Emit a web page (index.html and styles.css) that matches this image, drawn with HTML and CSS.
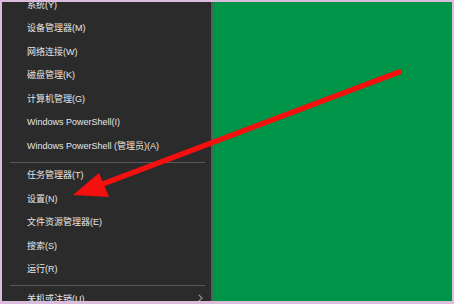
FILE: index.html
```html
<!DOCTYPE html>
<html lang="zh-CN">
<head>
<meta charset="utf-8">
<link rel="stylesheet" href="styles.css">
</head>
<body>
<div class="frame">
  <nav class="menu">
    <ul class="list">
      <li class="item">系统(Y)</li>
      <li class="item">设备管理器(M)</li>
      <li class="item">网络连接(W)</li>
      <li class="item">磁盘管理(K)</li>
      <li class="item">计算机管理(G)</li>
      <li class="item">Windows PowerShell(I)</li>
      <li class="item">Windows PowerShell (管理员)(A)</li>
      <li class="sep"></li>
      <li class="item">任务管理器(T)</li>
      <li class="item">设置(N)</li>
      <li class="item">文件资源管理器(E)</li>
      <li class="item">搜索(S)</li>
      <li class="item">运行(R)</li>
      <li class="sep"></li>
      <li class="item has-sub">关机或注销(U)
        <svg class="chev" width="5" height="8" viewBox="0 0 5 8"><path d="M0.8 0.8 L4 4 L0.8 7.2" fill="none" stroke="#9a9a9a" stroke-width="1.1"/></svg>
      </li>
    </ul>
  </nav>
  <div class="edge"></div>
  <div class="desktop"></div>
  <svg class="arrow" width="454" height="304" viewBox="0 0 454 304">
    <line x1="399" y1="72" x2="100" y2="185" stroke="#f50f0f" stroke-width="5.5" stroke-linecap="round"/>
    <polygon points="73,195 99,173 109,197" fill="#f50f0f"/>
  </svg>
</div>
</body>
</html>
```
FILE: styles.css
```css
html, body {
  margin: 0;
  padding: 0;
}
body {
  width: 454px;
  height: 304px;
  background: #dcbcdc;
  overflow: hidden;
}
.frame {
  position: relative;
  display: flex;
  height: 304px;
  box-sizing: border-box;
  padding: 2px 2px 3px 2px;
}
.menu {
  width: 209px;
  background: #2b2b2b;
  overflow: hidden;
  flex: none;
}
.list {
  list-style: none;
  margin: -9.6px 0 0 0;
  padding: 0;
  font-family: "Liberation Sans", "Noto Sans CJK SC", sans-serif;
  font-size: 9px;
  color: #e6e6e6;
}
.item {
  height: 23.5px;
  display: flex;
  align-items: center;
  padding-left: 25px;
  white-space: nowrap;
}
.has-sub {
  justify-content: space-between;
  padding-right: 8px;
}
.sep {
  height: 1px;
  background: #5a5a5a;
  margin: 5px 6px 0 8px;
}
.edge {
  width: 2px;
  background: #3f6a4e;
  flex: none;
}
.desktop {
  flex: 1;
  background: #009449;
}
.arrow {
  position: absolute;
  left: 0;
  top: 0;
}
```
